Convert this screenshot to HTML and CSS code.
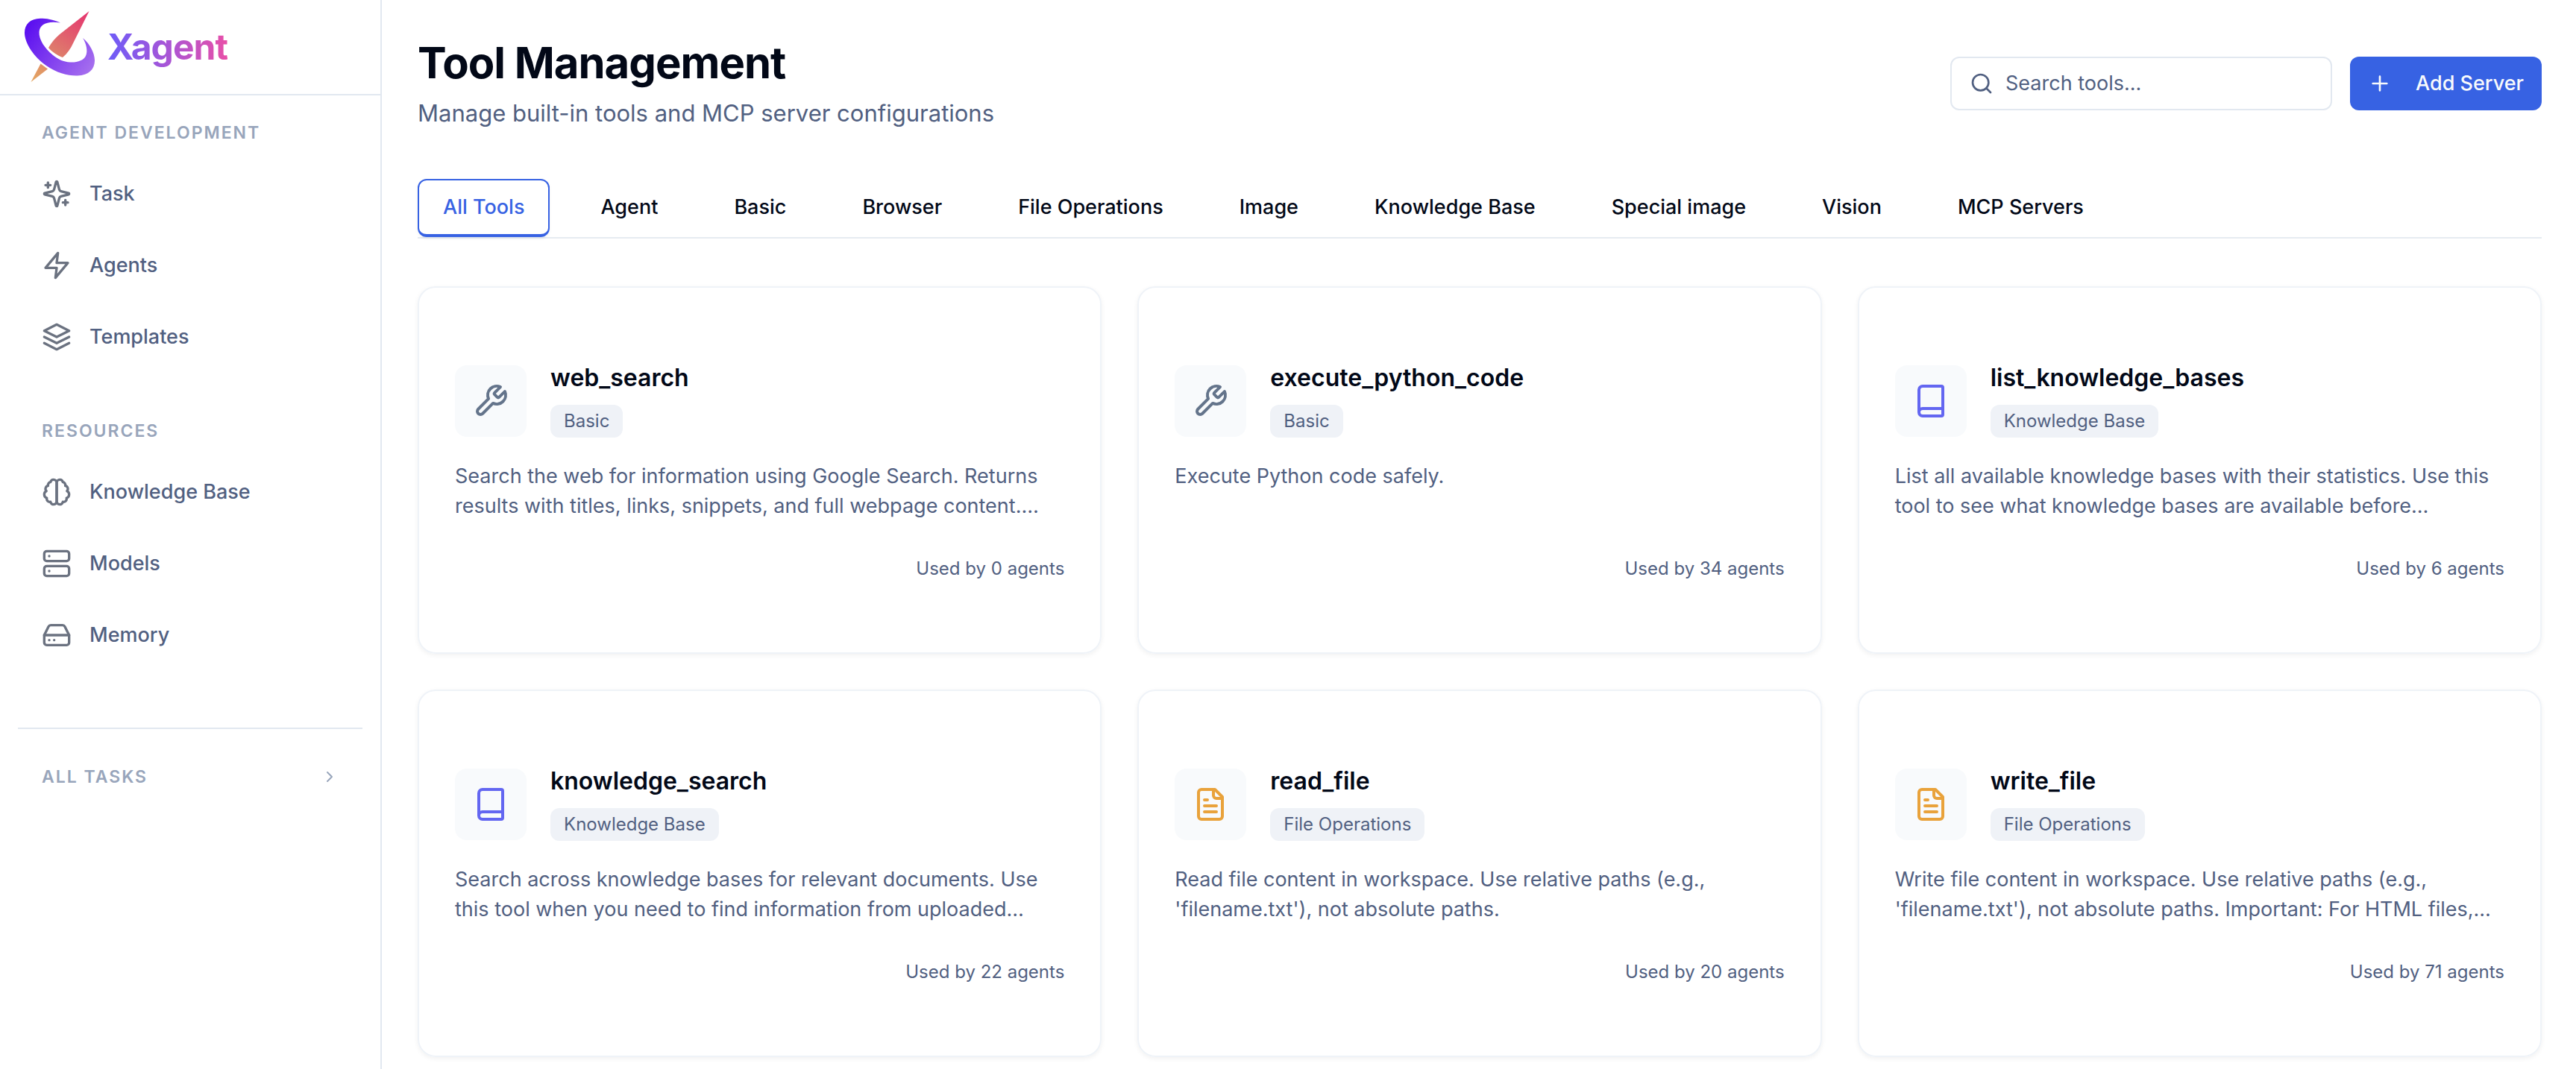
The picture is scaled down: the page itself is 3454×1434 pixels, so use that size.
FILE: index.html
```
<!DOCTYPE html>
<html lang="en">
<head>
    <meta charset="UTF-8">
    <meta name="viewport" content="width=device-width, initial-scale=1.0">
    <title>Xagent - Tool Management</title>
    <link rel="stylesheet" href="styles.css">
</head>
<body>
    <!-- shared icons -->
    <svg class="sprite" aria-hidden="true">
        <symbol id="i-sparkles" viewBox="0 0 24 24">
            <path d="M9.937 15.5A2 2 0 0 0 8.5 14.063l-6.135-1.582a.5.5 0 0 1 0-.962L8.5 9.936A2 2 0 0 0 9.937 8.5l1.582-6.135a.5.5 0 0 1 .963 0L14.063 8.5A2 2 0 0 0 15.5 9.937l6.135 1.581a.5.5 0 0 1 0 .964L15.5 14.063a2 2 0 0 0-1.437 1.437l-1.582 6.135a.5.5 0 0 1-.963 0z"/>
            <path d="M19 17v4M21 19h-4M5 3v4M7 5H3"/>
        </symbol>
        <symbol id="i-zap" viewBox="0 0 24 24">
            <path d="M13 2 3 14h9l-1 8 10-12h-9l1-8z"/>
        </symbol>
        <symbol id="i-layers" viewBox="0 0 24 24">
            <path d="m12 2 10 5-10 5L2 7z"/>
            <path d="m2 12 10 5 10-5"/>
            <path d="m2 17 10 5 10-5"/>
        </symbol>
        <symbol id="i-brain" viewBox="0 0 24 24">
            <path d="M9.5 2A2.5 2.5 0 0 1 12 4.500v15a2.500 2.500 0 0 1-4.960.440 2.500 2.500 0 0 1-2.960-3.080 3 3 0 0 1-.340-5.580 2.500 2.500 0 0 1 1.320-4.240 2.500 2.500 0 0 1 1.980-3A2.500 2.500 0 0 1 9.500 2Z"/>
            <path d="M14.500 2A2.500 2.500 0 0 0 12 4.500v15a2.500 2.500 0 0 0 4.960.440 2.500 2.500 0 0 0 2.960-3.080 3 3 0 0 0 .340-5.580 2.500 2.500 0 0 0-1.320-4.240 2.500 2.500 0 0 0-1.980-3A2.500 2.500 0 0 0 14.500 2Z"/>
        </symbol>
        <symbol id="i-server" viewBox="0 0 24 24">
            <rect width="20" height="8" x="2" y="2" rx="2"/>
            <rect width="20" height="8" x="2" y="14" rx="2"/>
            <path d="M6 6h.01M6 18h.01"/>
        </symbol>
        <symbol id="i-drive" viewBox="0 0 24 24">
            <path d="M22 12H2"/>
            <path d="M5.450 5.110 2 12v6a2 2 0 0 0 2 2h16a2 2 0 0 0 2-2v-6l-3.450-6.890A2 2 0 0 0 16.760 4H7.240a2 2 0 0 0-1.790 1.110z"/>
            <path d="M6 16h.01M10 16h.01"/>
        </symbol>
        <symbol id="i-chevron" viewBox="0 0 24 24">
            <path d="m9 18 6-6-6-6"/>
        </symbol>
        <symbol id="i-search" viewBox="0 0 24 24">
            <circle cx="11" cy="11" r="8"/>
            <path d="m21 21-4.300-4.300"/>
        </symbol>
        <symbol id="i-plus" viewBox="0 0 24 24">
            <path d="M5 12h14M12 5v14"/>
        </symbol>
        <symbol id="i-wrench" viewBox="0 0 24 24">
            <path d="M14.700 6.300a1 1 0 0 0 0 1.400l1.600 1.600a1 1 0 0 0 1.400 0l3.770-3.770a6 6 0 0 1-7.940 7.940l-6.910 6.910a2.120 2.120 0 0 1-3-3l6.910-6.910a6 6 0 0 1 7.940-7.940l-3.760 3.760z"/>
        </symbol>
        <symbol id="i-book" viewBox="0 0 24 24">
            <path d="M4 19.500v-15A2.500 2.500 0 0 1 6.500 2H19a1 1 0 0 1 1 1v18a1 1 0 0 1-1 1H6.500a1 1 0 0 1 0-5H20"/>
        </symbol>
        <symbol id="i-file" viewBox="0 0 24 24">
            <path d="M15 2H6a2 2 0 0 0-2 2v16a2 2 0 0 0 2 2h12a2 2 0 0 0 2-2V7Z"/>
            <path d="M14 2v4a2 2 0 0 0 2 2h4"/>
            <path d="M10 9H8M16 13H8M16 17H8"/>
        </symbol>
    </svg>

    <div class="layout">
        <aside class="sidebar">
            <div class="brand">
                <svg class="logo" viewBox="32 15 96 96" aria-hidden="true">
                    <defs>
                        <linearGradient id="ring" x1="0" y1="0.2" x2="1" y2="0.8">
                            <stop offset="0" stop-color="#5b0ff0"/>
                            <stop offset="1" stop-color="#a56eee"/>
                        </linearGradient>
                        <linearGradient id="rocket" gradientUnits="userSpaceOnUse" x1="112" y1="15" x2="50" y2="110">
                            <stop offset="0" stop-color="#e5366f"/>
                            <stop offset="0.6" stop-color="#de7e6c"/>
                            <stop offset="1" stop-color="#e3a462"/>
                        </linearGradient>
                    </defs>
                    <path fill="url(#ring)" d="M81 30.500C71 26 62 24.800 54 24.800C41 25 33 32 33 44C33 58 46 77 62 88C76 98 92 102 104 101.500C119 101 127 93 127 81C127 71 120 58 111 51C116 59 118 69 115 75C112 81 104 84 94 83.500C85 83 78 79.500 71 74C60 65 52 53 52.500 43C53 33 63 27.500 81 30.500Z"/>
                    <path fill="url(#rocket)" d="M119.500 15L80 46C74 51 69 57 65 64C70 70 77 74.500 84 77C90 72 95 65 98 58Z"/>
                    <path fill="url(#rocket)" d="M54.500 85.500L64 92.500L41.500 110Z"/>
                </svg>
                <span class="brand-name">Xagent</span>
            </div>

            <nav class="nav">
                <section class="nav-group">
                    <h2>AGENT DEVELOPMENT</h2>
                    <a href="#"><svg class="icon"><use href="#i-sparkles"/></svg>Task</a>
                    <a href="#"><svg class="icon"><use href="#i-zap"/></svg>Agents</a>
                    <a href="#"><svg class="icon"><use href="#i-layers"/></svg>Templates</a>
                </section>
                <section class="nav-group">
                    <h2>RESOURCES</h2>
                    <a href="#"><svg class="icon"><use href="#i-brain"/></svg>Knowledge Base</a>
                    <a href="#"><svg class="icon"><use href="#i-server"/></svg>Models</a>
                    <a href="#"><svg class="icon"><use href="#i-drive"/></svg>Memory</a>
                </section>
            </nav>

            <div class="all-tasks">
                <button type="button">ALL TASKS<svg class="icon"><use href="#i-chevron"/></svg></button>
            </div>
        </aside>

        <main class="main">
            <header class="page-header">
                <div>
                    <h1>Tool Management</h1>
                    <p>Manage built-in tools and MCP server configurations</p>
                </div>
                <div class="actions">
                    <label class="search">
                        <svg class="icon"><use href="#i-search"/></svg>
                        <input type="text" placeholder="Search tools..." aria-label="Search tools">
                    </label>
                    <button class="add-btn" type="button"><svg class="icon"><use href="#i-plus"/></svg>Add Server</button>
                </div>
            </header>

            <div class="tabs">
                <button type="button" class="active">All Tools</button>
                <button type="button">Agent</button>
                <button type="button">Basic</button>
                <button type="button">Browser</button>
                <button type="button">File Operations</button>
                <button type="button">Image</button>
                <button type="button">Knowledge Base</button>
                <button type="button">Special image</button>
                <button type="button">Vision</button>
                <button type="button">MCP Servers</button>
            </div>

            <div class="cards">
                <article class="card">
                    <div class="card-head">
                        <span class="tile"><svg class="icon"><use href="#i-wrench"/></svg></span>
                        <div>
                            <h3>web_search</h3>
                            <span class="badge">Basic</span>
                        </div>
                    </div>
                    <p class="desc">Search the web for information using Google Search. Returns results with titles, links, snippets, and full webpage content.…</p>
                    <p class="usage">Used by 0 agents</p>
                </article>
                <article class="card">
                    <div class="card-head">
                        <span class="tile"><svg class="icon"><use href="#i-wrench"/></svg></span>
                        <div>
                            <h3>execute_python_code</h3>
                            <span class="badge">Basic</span>
                        </div>
                    </div>
                    <p class="desc">Execute Python code safely.</p>
                    <p class="usage">Used by 34 agents</p>
                </article>
                <article class="card">
                    <div class="card-head">
                        <span class="tile knowledge"><svg class="icon"><use href="#i-book"/></svg></span>
                        <div>
                            <h3>list_knowledge_bases</h3>
                            <span class="badge">Knowledge Base</span>
                        </div>
                    </div>
                    <p class="desc">List all available knowledge bases with their statistics. Use this tool to see what knowledge bases are available before…</p>
                    <p class="usage">Used by 6 agents</p>
                </article>
                <article class="card">
                    <div class="card-head">
                        <span class="tile knowledge"><svg class="icon"><use href="#i-book"/></svg></span>
                        <div>
                            <h3>knowledge_search</h3>
                            <span class="badge">Knowledge Base</span>
                        </div>
                    </div>
                    <p class="desc">Search across knowledge bases for relevant documents. Use this tool when you need to find information from uploaded…</p>
                    <p class="usage">Used by 22 agents</p>
                </article>
                <article class="card">
                    <div class="card-head">
                        <span class="tile file"><svg class="icon"><use href="#i-file"/></svg></span>
                        <div>
                            <h3>read_file</h3>
                            <span class="badge">File Operations</span>
                        </div>
                    </div>
                    <p class="desc">Read file content in workspace. Use relative paths (e.g., 'filename.txt'), not absolute paths.</p>
                    <p class="usage">Used by 20 agents</p>
                </article>
                <article class="card">
                    <div class="card-head">
                        <span class="tile file"><svg class="icon"><use href="#i-file"/></svg></span>
                        <div>
                            <h3>write_file</h3>
                            <span class="badge">File Operations</span>
                        </div>
                    </div>
                    <p class="desc">Write file content in workspace. Use relative paths (e.g., 'filename.txt'), not absolute paths. Important: For HTML files,…</p>
                    <p class="usage">Used by 71 agents</p>
                </article>
            </div>
        </main>
    </div>
</body>
</html>
```
FILE: styles.css
```
* {
    box-sizing: border-box;
    margin: 0;
    padding: 0;
}
body {
    font-family: Inter, "Liberation Sans", sans-serif;
    font-size: 27px;
    line-height: 40px;
    color: #020817;
    background: #fff;
}
button, input {
    font: inherit;
    color: inherit;
    border: none;
    background: none;
}
button { cursor: pointer; }
a { text-decoration: none; }
.sprite {
    display: none;
}
.icon {
    width: 32px;
    height: 32px;
    flex-shrink: 0;
    fill: none;
    stroke: currentColor;
    stroke-width: 2;
    stroke-linecap: round;
    stroke-linejoin: round;
}
.layout {
    display: flex;
    min-height: 100vh;
}

/* sidebar */
.sidebar {
    width: 512px;
    flex-shrink: 0;
    border-right: 2px solid #e2e8f0;
}
.brand {
    display: flex;
    align-items: center;
    gap: 16px;
    height: 128px;
    padding: 0 32px;
    border-bottom: 2px solid #e2e8f0;
}
.logo {
    width: 96px;
    height: 96px;
}
.brand-name {
    font-size: 48px;
    line-height: 64px;
    font-weight: 700;
    letter-spacing: -1px;
    color: transparent;
    background: linear-gradient(to right, #6d5cf8, #a855d6, #e84fa8);
    -webkit-background-clip: text;
    background-clip: text;
}
.nav {
    display: flex;
    flex-direction: column;
    gap: 66px;
    padding: 34px 24px 80px;
}
.nav-group {
    display: flex;
    flex-direction: column;
    gap: 8px;
}
.nav-group h2,
.all-tasks button {
    padding: 0 32px;
    font-size: 23px;
    line-height: 32px;
    font-weight: 600;
    letter-spacing: 2px;
    color: #98a5bb;
}
.nav-group h2 {
    margin-bottom: 14px;
}
.nav-group a {
    display: flex;
    align-items: center;
    gap: 24px;
    height: 88px;
    padding: 0 32px;
    border-radius: 16px;
    font-weight: 500;
    color: #516081;
}
.nav-group .icon {
    width: 40px;
    height: 40px;
    color: #6b7280;
}
.all-tasks {
    margin: 0 24px;
    padding-top: 48px;
    border-top: 2px solid #e2e8f0;
}
.all-tasks button {
    display: flex;
    align-items: center;
    justify-content: space-between;
    width: 100%;
}
.all-tasks .icon {
    width: 24px;
    height: 24px;
}

/* page header */
.main {
    flex: 1;
    min-width: 0;
    padding: 48px 46px 16px 48px;
}
.page-header {
    display: flex;
    align-items: center;
    justify-content: space-between;
    margin-bottom: 64px;
}
.page-header h1 {
    margin-bottom: 8px;
    font-size: 58px;
    line-height: 72px;
    font-weight: 700;
    letter-spacing: -1px;
}
.page-header p {
    font-size: 31px;
    line-height: 48px;
    color: #516081;
}
.actions {
    display: flex;
    gap: 24px;
}
.search {
    display: flex;
    align-items: center;
    gap: 16px;
    width: 512px;
    height: 72px;
    padding: 0 24px;
    border: 2px solid #e2e8f0;
    border-radius: 12px;
    color: #516081;
}
.search input {
    flex: 1;
    min-width: 0;
    outline: none;
}
.search input::placeholder {
    color: #516081;
    opacity: 1;
}
.add-btn {
    display: flex;
    align-items: center;
    gap: 32px;
    height: 72px;
    padding: 0 24px;
    border-radius: 12px;
    font-weight: 500;
    color: #f8fafc;
    background: #3762e3;
}

/* category tabs */
.tabs {
    display: flex;
    gap: 34px;
    margin-bottom: 64px;
    border-bottom: 2px solid #e6ebf1;
}
.tabs button {
    padding: 16px 32px;
    border: 2px solid transparent;
    border-bottom-width: 4px;
    border-radius: 12px;
    font-weight: 500;
}
.tabs .active {
    border-color: #3762e3;
    color: #3762e3;
    box-shadow: 0 2px 4px rgba(0, 0, 0, 0.05);
}

/* tool cards */
.cards {
    display: grid;
    grid-template-columns: repeat(3, 1fr);
    gap: 48px;
}
.card {
    display: flex;
    flex-direction: column;
    padding: 103px 48px 96px;
    border: 2px solid #eff3f8;
    border-radius: 24px;
    box-shadow: 0 2px 6px rgba(0, 0, 0, 0.06);
}
.card-head {
    display: flex;
    align-items: center;
    gap: 32px;
    margin-bottom: 32px;
}
.tile {
    display: flex;
    align-items: center;
    justify-content: center;
    width: 96px;
    height: 96px;
    border-radius: 16px;
    color: #64748b;
    background: #f8fafc;
}
.tile .icon {
    width: 48px;
    height: 48px;
}
.tile.knowledge { color: #6366f1; }
.tile.file { color: #e9a23b; }
.card h3 {
    margin-bottom: 18px;
    font-size: 32px;
    line-height: 36px;
    font-weight: 600;
}
.badge {
    display: block;
    width: max-content;
    padding: 6px 18px;
    border-radius: 12px;
    font-size: 24px;
    line-height: 32px;
    color: #516081;
    background: #eff2f7;
}
.desc {
    min-height: 80px;
    margin-bottom: 48px;
    color: #516081;
}
.usage {
    font-size: 24px;
    line-height: 32px;
    text-align: right;
    color: #516081;
}
```
